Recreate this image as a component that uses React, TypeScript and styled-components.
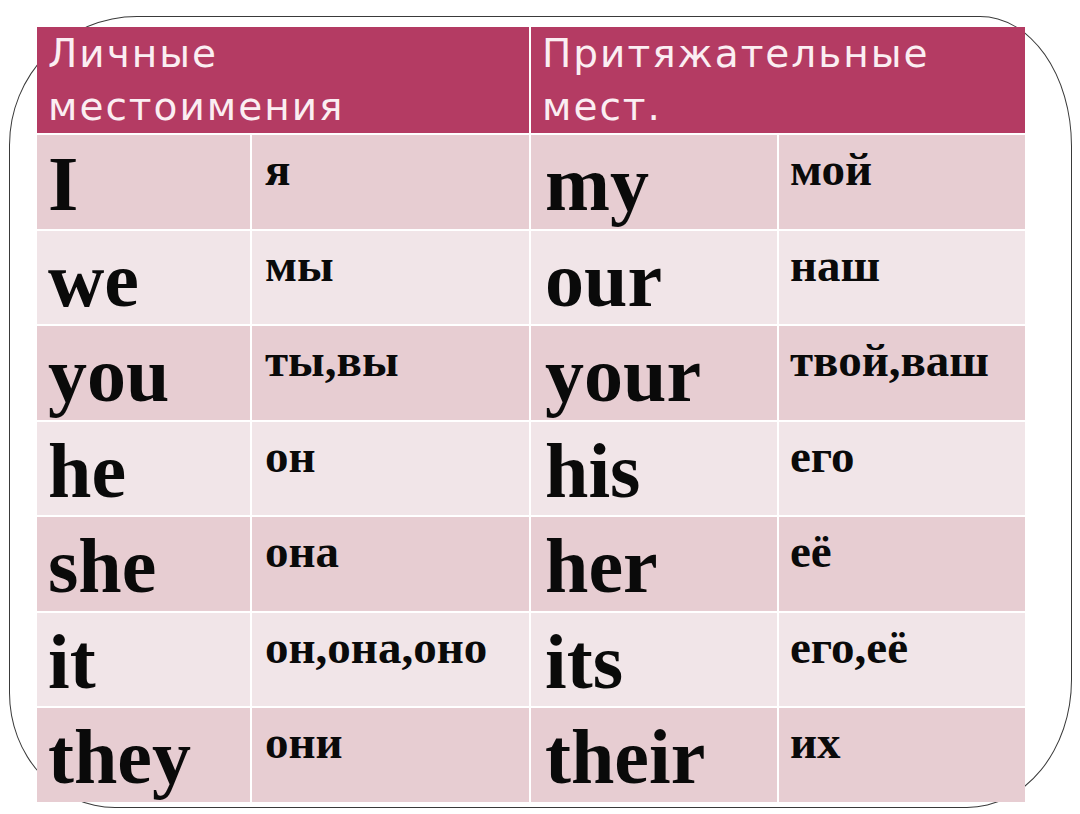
import React from "react";
import styled, { createGlobalStyle } from "styled-components";

interface Pair {
  personal: string;
  personalRu: string;
  possessive: string;
  possessiveRu: string;
}

const pairs: Pair[] = [
  { personal: "I", personalRu: "я", possessive: "my", possessiveRu: "мой" },
  { personal: "we", personalRu: "мы", possessive: "our", possessiveRu: "наш" },
  { personal: "you", personalRu: "ты,вы", possessive: "your", possessiveRu: "твой,ваш" },
  { personal: "he", personalRu: "он", possessive: "his", possessiveRu: "его" },
  { personal: "she", personalRu: "она", possessive: "her", possessiveRu: "её" },
  { personal: "it", personalRu: "он,она,оно", possessive: "its", possessiveRu: "его,её" },
  { personal: "they", personalRu: "они", possessive: "their", possessiveRu: "их" },
];

export default function App() {
  return (
    <>
      <GlobalStyle />
      <Page>
        <Frame>
          <Table>
            <HeaderCell>Личные местоимения</HeaderCell>
            <HeaderCell>Притяжательные мест.</HeaderCell>
            {pairs.map((p, i) => (
              <React.Fragment key={p.personal}>
                <WordCell $dark={i % 2 === 0}>{p.personal}</WordCell>
                <TranslationCell $dark={i % 2 === 0}>{p.personalRu}</TranslationCell>
                <WordCell $dark={i % 2 === 0} $inset>
                  {p.possessive}
                </WordCell>
                <TranslationCell $dark={i % 2 === 0} $inset>
                  {p.possessiveRu}
                </TranslationCell>
              </React.Fragment>
            ))}
          </Table>
        </Frame>
      </Page>
    </>
  );
}

const GlobalStyle = createGlobalStyle`
  html, body {
    margin: 0;
    padding: 0;
    background: #ffffff;
  }
  body {
    width: 1080px;
    height: 814px;
    overflow: hidden;
  }
`;

const Page = styled.div`
  width: 1080px;
  height: 814px;
  padding: 16px 0 0 9px;
  box-sizing: border-box;
  background: #ffffff;
`;

const Frame = styled.div`
  width: 1063px;
  height: 792px;
  box-sizing: border-box;
  border: 1px solid #3a3a3a;
  border-radius: 128px 92px 105px 106px / 129px 130px 128px 115px;
  padding: 10px 0 0 27px;
`;

const Table = styled.div`
  width: 988px;
  height: 775px;
  display: grid;
  grid-template-columns: 213px 277px 246px 246px;
  grid-template-rows: 106px repeat(7, 1fr);
  gap: 2px;
  background: #ffffff;
`;

const HeaderCell = styled.div`
  grid-column: span 2;
  background: #b43b63;
  color: #fbeef2;
  font-family: "DejaVu Sans", sans-serif;
  font-size: 39px;
  line-height: 53px;
  letter-spacing: 2px;
  padding: 0 40px 0 11px;
  box-sizing: border-box;
`;

const BodyCell = styled.div<{ $dark: boolean; $inset?: boolean }>`
  background: ${(p) => (p.$dark ? "#e7cdd2" : "#f1e5e8")};
  color: #0a0a0a;
  font-family: "Liberation Serif", "Times New Roman", serif;
  font-weight: bold;
  box-sizing: border-box;
  white-space: nowrap;
`;

const WordCell = styled(BodyCell)`
  font-size: 78px;
  line-height: 78px;
  padding: 10px 0 0 ${(p) => (p.$inset ? "14px" : "11px")};
`;

const TranslationCell = styled(BodyCell)`
  font-size: 47px;
  line-height: 47px;
  padding: 11px 0 0 ${(p) => (p.$inset ? "11px" : "13px")};
`;
